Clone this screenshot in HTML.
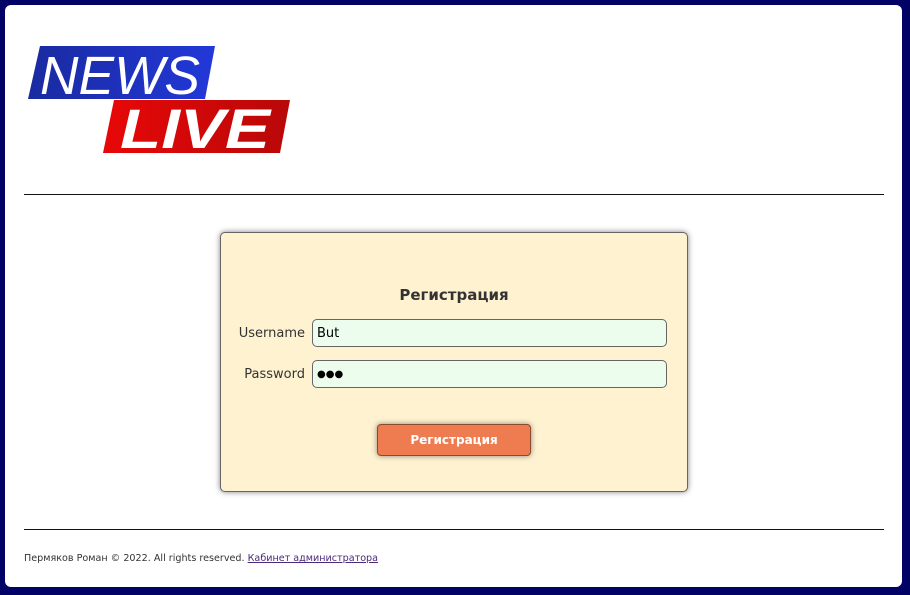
<!DOCTYPE html>
<html><head><meta charset="utf-8"><style>
*{margin:0;padding:0;box-sizing:border-box}
body{width:910px;height:595px;background:#020266;font-family:"DejaVu Sans","Liberation Sans",sans-serif;position:relative;overflow:hidden}
.card{position:absolute;left:5px;top:5px;width:897px;height:582px;background:#fff;border-radius:6px}
.hr{position:absolute;left:24px;width:860px;height:1px;background:#111}
.form{position:absolute;left:220px;top:232px;width:468px;height:260px;background:#fff2d0;border:1px solid #666;border-radius:5px;box-shadow:0 0 6px rgba(0,0,0,.5)}
.t{position:absolute;left:0;width:100%;top:53px;text-align:center;font-weight:bold;font-size:15px;color:#333}
.lbl{position:absolute;font-size:13px;color:#333;text-align:right;width:84px;left:0}
.inp{position:absolute;left:91px;width:355px;height:28px;background:#edfded;border:1px solid #666;border-radius:5px;font-size:13px;padding:6px 4px;color:#000}
.btn{position:absolute;left:156px;top:191px;width:154px;height:32px;background:#ee7c50;border:1px solid #8a4a30;border-radius:4px;box-shadow:0 0 6px rgba(0,0,0,.45);color:#fff;font-weight:bold;font-size:12px;text-align:center;line-height:30px}
.foot{position:absolute;left:24px;top:553px;font-size:9.6px;color:#333}
.foot a{color:#4b2a7a;text-decoration:underline}
</style></head><body>
<div class="card"></div>
<svg style="position:absolute;left:0;top:0" width="310" height="170">
<defs>
<linearGradient id="b" x1="0" x2="1"><stop offset="0" stop-color="#1a2aa0"/><stop offset="1" stop-color="#2238d8"/></linearGradient>
<linearGradient id="r" x1="0" x2="1"><stop offset="0" stop-color="#e80808"/><stop offset="1" stop-color="#b80808"/></linearGradient>
</defs>
<polygon points="40,46 215,46 205,99 28,99" fill="url(#b)"/>
<polygon points="114,100 290,100 280,153 103,153" fill="url(#r)"/>
<text x="40" y="94" font-family="Liberation Sans" font-style="italic" font-size="54" fill="#fff" textLength="160" lengthAdjust="spacingAndGlyphs">NEWS</text>
<text x="120" y="148" font-family="Liberation Sans" font-style="italic" font-weight="bold" font-size="56" fill="#fff" textLength="150" lengthAdjust="spacingAndGlyphs">LIVE</text>
</svg>
<div class="hr" style="top:194px"></div>
<div class="form">
<div class="t">Регистрация</div>
<div class="lbl" style="top:93px">Username</div>
<div class="inp" style="top:86px">But</div>
<div class="lbl" style="top:134px">Password</div>
<div class="inp" style="top:127px;font-size:10px;padding-top:8px">●●●</div>
<div class="btn">Регистрация</div>
</div>
<div class="hr" style="top:529px"></div>
<div class="foot">Пермяков Роман © 2022. All rights reserved. <a>Кабинет администратора</a></div>
</body></html>
